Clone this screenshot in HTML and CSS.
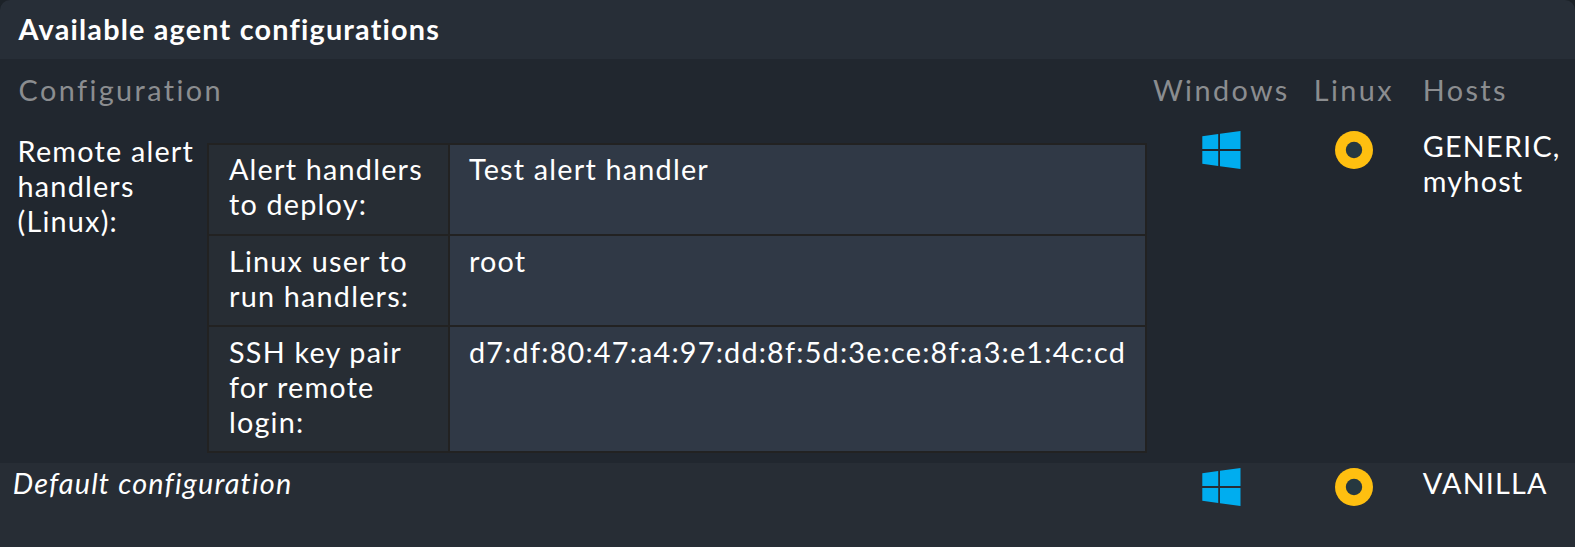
FILE: index.html
```html
<!DOCTYPE html>
<html lang="en">
<head>
<meta charset="utf-8">
<title>Available agent configurations</title>
<link rel="stylesheet" href="styles.css">
</head>
<body>
<svg class="defs" width="0" height="0" aria-hidden="true">
  <symbol id="windows" viewBox="0 0 39 38">
    <path d="M.3 5.2 16.2 3V18H.3ZM18 2.8 38.5 0V18H18ZM.3 20H16.2V35L.3 32.8ZM18 20H38.5V38L18 35.2Z" fill="#00adef"/>
  </symbol>
  <symbol id="linux" viewBox="0 0 38 38">
    <circle cx="19" cy="19" r="19" fill="#ffbf10"/>
    <circle cx="19" cy="19" r="8.2" fill="#263840"/>
  </symbol>
</svg>
<main class="panel">
  <h1 class="title">Available agent configurations</h1>
  <div class="row head">
    <div class="config">Configuration</div>
    <div class="windows">Windows</div>
    <div class="linux">Linux</div>
    <div class="hosts">Hosts</div>
  </div>
  <div class="row odd">
    <div class="config rule">
      <div class="rule-name">Remote alert<br>handlers<br>(Linux):</div>
      <div class="settings">
        <div class="key first">Alert handlers<br>to deploy:</div>
        <div class="value first">Test alert handler</div>
        <div class="key">Linux user to<br>run handlers:</div>
        <div class="value">root</div>
        <div class="key">SSH key pair<br>for remote<br>login:</div>
        <div class="value">d7:df:80:47:a4:97:dd:8f:5d:3e:ce:8f:a3:e1:4c:cd</div>
      </div>
    </div>
    <div class="icon"><svg class="windows-logo"><use href="#windows"/></svg></div>
    <div class="icon"><svg><use href="#linux"/></svg></div>
    <div class="hosts">GENERIC,<br>myhost</div>
  </div>
  <div class="row even">
    <div class="config default">Default configuration</div>
    <div class="icon"><svg class="windows-logo"><use href="#windows"/></svg></div>
    <div class="icon"><svg><use href="#linux"/></svg></div>
    <div class="hosts">VANILLA</div>
  </div>
</main>
</body>
</html>
```

FILE: styles.css
```css
body {
  margin: 0;
  background: #1c2228;
  color: #fff;
  font: 28.8px/35px Lato, sans-serif;
  letter-spacing: 1.2px;
}
.defs { display: block; }
.panel {
  height: 547px;
  display: flex;
  flex-direction: column;
  border-radius: 10px 10px 0 0;
  overflow: hidden;
  white-space: nowrap;
}
.title {
  box-sizing: border-box;
  height: 59px;
  margin: 0;
  padding: 12px 18.6px;
  background: #272e37;
  font-size: 28.8px;
  font-weight: 700;
}
.row {
  display: grid;
  grid-template-columns: 1153px 136px 130px 156px;
  background: #21272f;
}
.head {
  height: 67px;
  box-sizing: border-box;
  padding-top: 14px;
  color: #8b8d90;
  letter-spacing: 2.4px;
}
.head .config { padding-left: 18.6px; }
.head .linux { padding-left: 24.8px; }
.hosts { padding-left: 3.8px; }
.odd { height: 337px; }
.odd .hosts { padding-top: 3px; }
.rule { display: flex; align-items: flex-start; }
.rule-name { width: 189.4px; padding: 8px 0 0 17.6px; }
.settings {
  display: grid;
  grid-template-columns: 239px 695px;
  grid-template-rows: 89px 89px 124px;
  gap: 2px;
  padding: 2px;
  margin-top: 17px;
  background: #222;
}
.key, .value { padding: 8px 19px 0 20px; background: #272d34; }
.value { padding-left: 19px; background: #303946; }
.first { padding-top: 7px; }
.icon { padding: 5px 0 0 49px; }
.icon + .icon { padding-left: 46px; }
.icon svg { display: block; width: 38px; height: 38px; }
.icon .windows-logo { width: 39px; }
.even { flex: 1; background: #272d35; }
.even .hosts, .default { padding-top: 3px; }
.default { padding-left: 12.7px; font-style: italic; }
```
